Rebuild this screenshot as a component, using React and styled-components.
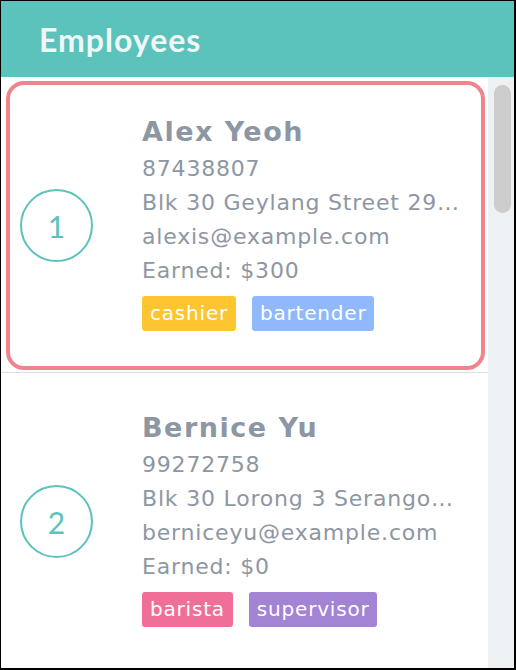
import React from 'react'
import styled, { createGlobalStyle } from 'styled-components'

const GlobalStyle = createGlobalStyle`
  * { box-sizing: border-box; }
  html, body { margin: 0; padding: 0; background: #fff; }
  body { font-family: "DejaVu Sans", "Liberation Sans", sans-serif; }
`

const Frame = styled.div`
  width: 516px;
  height: 670px;
  border: 1px solid #000;
  border-right-width: 2px;
  border-bottom-width: 2px;
  display: flex;
  flex-direction: column;
  overflow: hidden;
`

const Header = styled.header`
  flex: 0 0 76px;
  background: #5bc2bc;
  display: flex;
  align-items: center;
  padding-left: 38px;
`

const Title = styled.h1`
  margin: 0;
  font-family: Lato, "Open Sans", sans-serif;
  font-weight: 700;
  font-size: 32px;
  letter-spacing: 1px;
  color: #eef8f7;
`

const Body = styled.div`
  flex: 1;
  min-height: 0;
  display: flex;
`

const List = styled.ul`
  flex: 1;
  min-width: 0;
  margin: 0;
  padding: 0;
  list-style: none;
  overflow: hidden;
  background: #fff;
`

// drawn scrollbar: the headless browser hides its own overlay bars
const ScrollTrack = styled.div`
  flex: 0 0 26px;
  background: #eef1f4;
  padding: 8px 3px 0 6px;
`

const ScrollThumb = styled.div`
  height: 128px;
  border-radius: 9px;
  background: #cccccc;
`

const Row = styled.li`
  padding: 4px 3px 2px 5px;
  border-bottom: 1px solid #dcdde1;
`

const Card = styled.div`
  height: 289px;
  display: flex;
  align-items: center;
  gap: 49px;
  padding: 0 20px 0 10px;
  border: 4px solid ${props => props.selected ? '#f0848c' : 'transparent'};
  border-radius: 18px;
`

const Index = styled.div`
  flex: 0 0 73px;
  height: 73px;
  border: 2px solid #5bc2bc;
  border-radius: 50%;
  display: flex;
  align-items: center;
  justify-content: center;
  font-family: Lato, sans-serif;
  font-weight: 400;
  font-size: 30px;
  color: #5bc2bc;
`

const Details = styled.div`
  flex: 1;
  min-width: 0;
  padding-bottom: 8px;
  color: #8d96a3;
  font-size: 22px;
  letter-spacing: 0.8px;
`

const Name = styled.div`
  font-weight: 700;
  font-size: 27px;
  letter-spacing: 1.5px;
  line-height: 40px;
  white-space: nowrap;
  overflow: hidden;
  text-overflow: ellipsis;
`

const Line = styled.div`
  line-height: 34px;
  white-space: nowrap;
  overflow: hidden;
  text-overflow: ellipsis;
`

const Tags = styled.div`
  display: flex;
  gap: 16px;
  margin-top: 8px;
`

const Tag = styled.span`
  height: 35px;
  padding: 0 8px;
  border-radius: 3px;
  background: ${props => props.color};
  color: #fff;
  font-size: 20px;
  line-height: 35px;
`

const tagColors = {
  cashier: '#fdc52f',
  bartender: '#8fb9fb',
  barista: '#f06f98',
  supervisor: '#a283d4',
  chef: '#f3a35c',
  waiter: '#7fd1a0'
}

const employees = [
  { name: 'Alex Yeoh', phone: '87438807', address: 'Blk 30 Geylang Street 29, #06-40', email: 'alexis@example.com', earned: 300, tags: ['cashier', 'bartender'] },
  { name: 'Bernice Yu', phone: '99272758', address: 'Blk 30 Lorong 3 Serangoon Gardens, #07-18', email: 'berniceyu@example.com', earned: 0, tags: ['barista', 'supervisor'] },
  { name: 'Charlotte Oliveiro', phone: '93210283', address: 'Blk 11 Ang Mo Kio Street 74, #11-04', email: 'charlotte@example.com', earned: 120, tags: ['cashier'] },
  { name: 'David Li', phone: '91031282', address: 'Blk 436 Serangoon Gardens Street 26, #16-43', email: 'lidavid@example.com', earned: 80, tags: ['chef'] }
]

function EmployeeCard ({ employee, index, selected }) {
  return (
    <Row>
      <Card selected={selected}>
        <Index>{index}</Index>
        <Details>
          <Name>{employee.name}</Name>
          <Line>{employee.phone}</Line>
          <Line>{employee.address}</Line>
          <Line>{employee.email}</Line>
          <Line>Earned: ${employee.earned}</Line>
          <Tags>
            {employee.tags.map(tag => (
              <Tag key={tag} color={tagColors[tag]}>{tag}</Tag>
            ))}
          </Tags>
        </Details>
      </Card>
    </Row>
  )
}

export default function App () {
  return (
    <>
      <GlobalStyle />
      <Frame>
        <Header>
          <Title>Employees</Title>
        </Header>
        <Body>
          <List>
            {employees.map((employee, i) => (
              <EmployeeCard
                key={employee.phone}
                employee={employee}
                index={i + 1}
                selected={i === 0}
              />
            ))}
          </List>
          <ScrollTrack>
            <ScrollThumb />
          </ScrollTrack>
        </Body>
      </Frame>
    </>
  )
}
